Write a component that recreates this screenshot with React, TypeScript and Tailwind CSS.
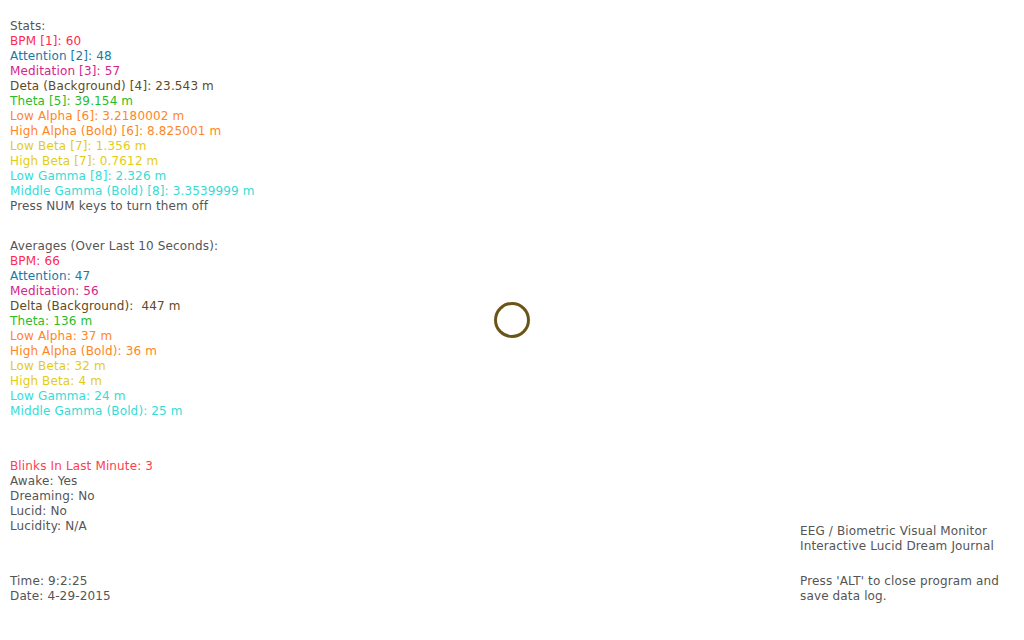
const stats = [
  { text: "BPM [1]: 60", color: "text-[#ff2952]" },
  { text: "Attention [2]: 48", color: "text-[#1a78a8]" },
  { text: "Meditation [3]: 57", color: "text-[#d6248a]" },
  { text: "Deta (Background) [4]: 23.543 m", color: "text-[#5e4b22]" },
  { text: "Theta [5]: 39.154 m", color: "text-[#26bd26]" },
  { text: "Low Alpha [6]: 3.2180002 m", color: "text-[#ff8526]" },
  { text: "High Alpha (Bold) [6]: 8.825001 m", color: "text-[#ff8526]" },
  { text: "Low Beta [7]: 1.356 m", color: "text-[#e3cc14]" },
  { text: "High Beta [7]: 0.7612 m", color: "text-[#e3cc14]" },
  { text: "Low Gamma [8]: 2.326 m", color: "text-[#36dbd6]" },
  { text: "Middle Gamma (Bold) [8]: 3.3539999 m", color: "text-[#36dbd6]" },
]

const averages = [
  { text: "BPM: 66", color: "text-[#ff2952]" },
  { text: "Attention: 47", color: "text-[#1a78a8]" },
  { text: "Meditation: 56", color: "text-[#d6248a]" },
  { text: "Delta (Background):  447 m", color: "text-[#5e4b22]" },
  { text: "Theta: 136 m", color: "text-[#26bd26]" },
  { text: "Low Alpha: 37 m", color: "text-[#ff8526]" },
  { text: "High Alpha (Bold): 36 m", color: "text-[#ff8526]" },
  { text: "Low Beta: 32 m", color: "text-[#e3cc14]" },
  { text: "High Beta: 4 m", color: "text-[#e3cc14]" },
  { text: "Low Gamma: 24 m", color: "text-[#36dbd6]" },
  { text: "Middle Gamma (Bold): 25 m", color: "text-[#36dbd6]" },
]

const state = ["Awake: Yes", "Dreaming: No", "Lucid: No", "Lucidity: N/A"]

function Line({ text, color = "text-[#555555]" }: { text: string; color?: string }) {
  return <div className={`whitespace-pre ${color}`}>{text}</div>
}

export default function App() {
  return (
    <div className="relative flex h-[640px] w-[1024px] bg-white text-[12px] leading-[15px] tracking-[0.14px] font-['DejaVu_Sans',Verdana,sans-serif] overflow-hidden">
      <div className="flex flex-1 flex-col pl-[10px] pt-[19px]">
        <Line text="Stats:" />
        {stats.map((s) => (
          <Line key={s.text} text={s.text} color={s.color} />
        ))}
        <Line text="Press NUM keys to turn them off" />

        <div className="mt-[25px]">
          <Line text="Averages (Over Last 10 Seconds):" />
          {averages.map((s) => (
            <Line key={s.text} text={s.text} color={s.color} />
          ))}
        </div>

        <div className="mt-[40px]">
          <Line text="Blinks In Last Minute: 3" color="text-[#ff3d4d]" />
          {state.map((t) => (
            <Line key={t} text={t} />
          ))}
        </div>

        <div className="mt-[40px]">
          <Line text="Time: 9:2:25" />
          <Line text="Date: 4-29-2015" />
        </div>
      </div>

      <div className="flex w-[224px] flex-col justify-end pb-[36px]">
        <Line text="EEG / Biometric Visual Monitor" />
        <Line text="Interactive Lucid Dream Journal" />
        <div className="mt-[20px]">
          <Line text="Press 'ALT' to close program and" />
          <Line text="save data log." />
        </div>
      </div>

      {/* pulse indicator drawn on the canvas */}
      <svg
        className="absolute left-[494px] top-[302px]"
        width="36"
        height="36"
        viewBox="0 0 36 36"
      >
        <circle cx="18" cy="18" r="16.5" fill="none" stroke="#6b5418" strokeWidth="3" />
      </svg>
    </div>
  )
}
